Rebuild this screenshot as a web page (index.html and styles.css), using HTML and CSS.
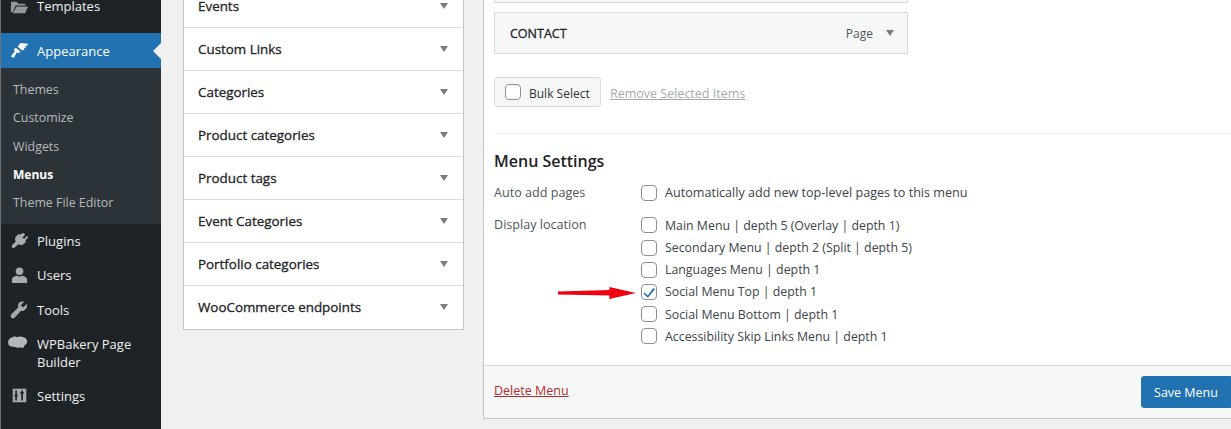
FILE: index.html
```html
<!DOCTYPE html>
<html lang="en">
<head>
<meta charset="utf-8">
<title>Menus</title>
<link rel="stylesheet" href="styles.css">
</head>
<body>
<div class="page">
  <aside class="sidebar">
    <a class="nav nav-first"><svg class="ico" viewBox="0 0 20 20"><path d="M1 5h6l2 2h7v2H6L3 16H1zM7 10h12l-3 7H3z"/></svg><span>Templates</span></a>
    <a class="nav nav-current"><svg class="ico ico-w" viewBox="0 0 20 20"><path d="M11 2l8 1-1 2-2 0 1 2-2 0 0 2-2 1-5-4zM6 7l5 4-2 2-2-1-3 6-3-2 4-5-1-2z"/></svg><span>Appearance</span></a>
    <div class="sub">
      <a>Themes</a>
      <a>Customize</a>
      <a>Widgets</a>
      <a class="sub-cur">Menus</a>
      <a>Theme File Editor</a>
    </div>
    <a class="nav nav-plugins"><svg class="ico" viewBox="0 0 20 20"><path d="M14 1l2 2-3 3 2 1 3-3 1 2-3 3 1 1-2 2c-2 2-4 2-6 1l-5 4-2-1 0-2 4-4c-1-2-1-4 1-6l2-2 1 1z"/></svg><span>Plugins</span></a>
    <a class="nav"><svg class="ico" viewBox="0 0 20 20"><circle cx="10" cy="5.500" r="4"/><path d="M2 18v-4c1-3 4-3.500 5-4 2 1.500 4 1.500 6 0 1 .5 4 1 5 4v4z"/></svg><span>Users</span></a>
    <a class="nav nav-tools"><svg class="ico" viewBox="0 0 20 20"><path d="M17.500 3.500l-3.500 3-2-1 0-2 3-2.500c-2.500-1-5 0-6 2-.7 1.400-.6 2.600-.2 3.600L1.500 14c-1 1-1 2.500-.2 3.500 1 1 2.500 1 3.500 0l6.800-7.200c1.300.4 2.800.2 4-.8 1.800-1.500 2.700-3.700 2.400-6z"/></svg><span>Tools</span></a>
    <a class="nav nav-tall"><svg class="ico ico-cloud" viewBox="0 0 22 16"><path d="M5 1c2-1 4-.5 5 0 2-1 5-1 7 0 2 .5 4 2 4 4.500 0 2-1 4-3 4.500 0 1.500-1 3-2 3l-2-1c-2 1-4 1-5 0-2 0-6 0-8-2C0 8.500-.3 5.500 1 3.500 2 2 3.500 1.500 5 1z"/></svg><span>WPBakery Page Builder</span></a>
    <a class="nav"><svg class="ico ico-set" viewBox="0 0 20 20"><path fill-rule="evenodd" d="M2 2h16v16H2zM5 4v5H4v2h1v5h2v-5h1V9H7V4zM12 4v2h-1v2h1v8h2V8h1V6h-1V4z"/></svg><span>Settings</span></a>
  </aside>

  <section class="accordion">
    <div class="acc-row acc-first">Events<i class="caret"></i></div>
    <div class="acc-row">Custom Links<i class="caret"></i></div>
    <div class="acc-row">Categories<i class="caret"></i></div>
    <div class="acc-row">Product categories<i class="caret"></i></div>
    <div class="acc-row">Product tags<i class="caret"></i></div>
    <div class="acc-row">Event Categories<i class="caret"></i></div>
    <div class="acc-row">Portfolio categories<i class="caret"></i></div>
    <div class="acc-row">WooCommerce endpoints<i class="caret"></i></div>
  </section>

  <section class="panel">
    <div class="panel-body">
      <div class="item item-prev"></div>
      <div class="item"><b>CONTACT</b><span class="item-type">Page</span><i class="caret"></i></div>
      <div class="bulk">
        <label class="bulk-btn"><i class="cb"></i><span class="bulk-text">Bulk Select</span></label>
        <a class="remove">Remove Selected Items</a>
      </div>
      <div class="settings">
        <h3>Menu Settings</h3>
        <div class="set-row set-auto">
          <div class="set-label">Auto add pages</div>
          <div class="opts"><div class="opt"><i class="cb"></i><span class="opt-long">Automatically add new top-level pages to this menu</span></div></div>
        </div>
        <div class="set-row">
          <div class="set-label">Display location</div>
          <div class="opts">
            <div class="opt"><i class="cb"></i>Main Menu | depth 5 (Overlay | depth 1)</div>
            <div class="opt"><i class="cb"></i>Secondary Menu | depth 2 (Split | depth 5)</div>
            <div class="opt"><i class="cb"></i>Languages Menu | depth 1</div>
            <div class="opt"><i class="cb cb-on"><svg viewBox="0 0 16 16"><path d="M3 8.500l3.500 3.500L13 3.500l1.800 1.300L6.700 14.500 1.700 10z"/></svg></i>Social Menu Top | depth 1<svg class="arrow" viewBox="0 0 80 12"><path d="M0 4.500l52-1.500V0l27 6-27 6V8.500L0 7.500z"/></svg></div>
            <div class="opt"><i class="cb"></i>Social Menu Bottom | depth 1</div>
            <div class="opt"><i class="cb"></i>Accessibility Skip Links Menu | depth 1</div>
          </div>
        </div>
      </div>
    </div>
    <div class="panel-foot">
      <a class="delete">Delete Menu</a>
      <button class="save">Save Menu</button>
    </div>
  </section>
</div>
</body>
</html>
```

FILE: styles.css
```css
* { box-sizing: border-box; }
html, body { margin: 0; height: 429px; overflow: hidden; }
body { background: #f0f0f1; font-family: "Open Sans", "Noto Sans", sans-serif; font-size: 13px; color: #3c434a; }
.page { display: flex; align-items: flex-start; height: 429px; overflow: hidden; }

.sidebar { width: 161px; height: 429px; flex: none; background: #1d2327; border-left: 1px solid #6d7175; color: #f0f0f1; }
.nav { display: flex; align-items: center; height: 34.500px; padding-left: 9px; gap: 8px; }
.nav span { line-height: 18px; }
.nav-first { margin-top: -11px; height: 34px; margin-bottom: 10px; }
.nav-first .ico { opacity: .85; }
.nav-current { height: 35px; background: #2271b1; color: #fff; position: relative; }
.nav-current::after { content: ""; position: absolute; right: 0; top: 10px; border: 8px solid transparent; border-right-color: #f0f0f1; border-left-width: 0; }
.nav-plugins { height: 34px; }
.nav-tools { height: 35px; }
.ico { width: 19px; height: 19px; fill: #a7aaad; flex: none; }
.ico-w { fill: #fff; }
.ico-cloud { width: 20px; height: 15px; margin: -19px 1px 0 -2px; fill: #b5b8bb; }
.ico-set { width: 17px; height: 17px; margin: 0 1px; fill: #a7aaad; }
.nav-tall { height: 51px; padding-bottom: 1px; }
.nav-tall span { width: 110px; }
.sub { background: #2c3338; height: 156px; padding-top: 8px; color: #b4b9be; display: flex; flex-direction: column; }
.sub a { height: 28.250px; line-height: 28px; padding-left: 12px; font-size: 12.400px; }
.sub .sub-cur { color: #fff; font-weight: 700; font-size: 12px; }

.accordion { width: 281px; margin: -15px 0 0 22px; background: #fff; border: 1px solid #c3c4c7; flex: none; border-top: 0; }
.acc-row { height: 43px; display: flex; align-items: center; justify-content: space-between; padding: 0 15px 0 14px; border-bottom: 1px solid #dcdcde; font-weight: 400; font-size: 13.400px; -webkit-text-stroke: .3px #1d2327; color: #1d2327; }
.acc-row:last-child { border-bottom: 0; padding-bottom: 2px; }
.caret { width: 0; height: 0; border: 4.500px solid transparent; border-top: 6px solid #787c82; border-bottom: 0; display: block; }

.panel { flex: 1; margin: -31px 0 0 19px; height: 450px; background: #fff; border: 1px solid #c3c4c7; border-right: 0; display: flex; flex-direction: column; min-width: 0; }
.panel-body { flex: 1; padding: 0 0 0 10px; }
.item { width: 414px; height: 42px; background: #f6f7f7; border: 1px solid #dcdcde; display: flex; align-items: center; padding: 0 13px 0 15px; font-size: 12px; color: #1d2327; }
.item b { font-weight: 400; flex: 1; font-size: 12.500px; -webkit-text-stroke: .3px #1d2327; }
.item-prev { height: 33px; margin-bottom: 9px; }
.item-type { color: #50575e; font-size: 12px; margin-right: 13px; }
.bulk { display: flex; align-items: center; margin-top: 23px; gap: 9px; }
.bulk-btn { display: flex; align-items: center; width: 107px; height: 30px; background: #f6f7f7; border: 1px solid #dcdcde; border-radius: 3px; padding-left: 10px; gap: 8px; font-size: 12px; color: #2c3338; }
.bulk-text { padding-top: 2px; }
.remove { color: #a7aaad; text-decoration: underline; font-size: 12.500px; padding-top: 2px; }
.settings { margin-top: 26px; padding-top: 17px; border-top: 1px solid #f0f0f1; }
h3 { margin: 0 0 10.600px; font-size: 16px; line-height: 20px; font-weight: 600; color: #1d2327; }
.set-row { display: flex; }
.set-auto { margin-bottom: 10.500px; }
.set-label { width: 147px; flex: none; line-height: 21.500px; font-size: 12.600px; color: #50575e; }
.opts { display: flex; flex-direction: column; }
.opt { display: flex; align-items: center; height: 22.200px; gap: 8px; font-size: 12.350px; color: #3c434a; white-space: nowrap; position: relative; }
.opt-long { font-size: 12.600px; }
.cb { width: 16px; height: 16px; border: 1px solid #8c8f94; border-radius: 4px; background: #fff; display: block; flex: none; }
.cb-on svg { display: block; width: 14px; height: 14px; fill: #2271b1; }
.arrow { position: absolute; left: -83px; top: 6px; width: 79px; height: 12px; fill: #f00010; }

.panel-foot { height: 53px; flex: none; background: #f6f7f7; border-top: 1px solid #dcdcde; display: flex; align-items: center; justify-content: space-between; padding-left: 10px; }
.delete { color: #b32d2e; text-decoration: underline; font-size: 12.500px; margin-top: -4px; }
.save { width: 90px; height: 32px; background: #2271b1; color: #fff; border: 1px solid #2271b1; border-radius: 3px 0 0 3px; font: inherit; font-size: 12.500px; }
```
